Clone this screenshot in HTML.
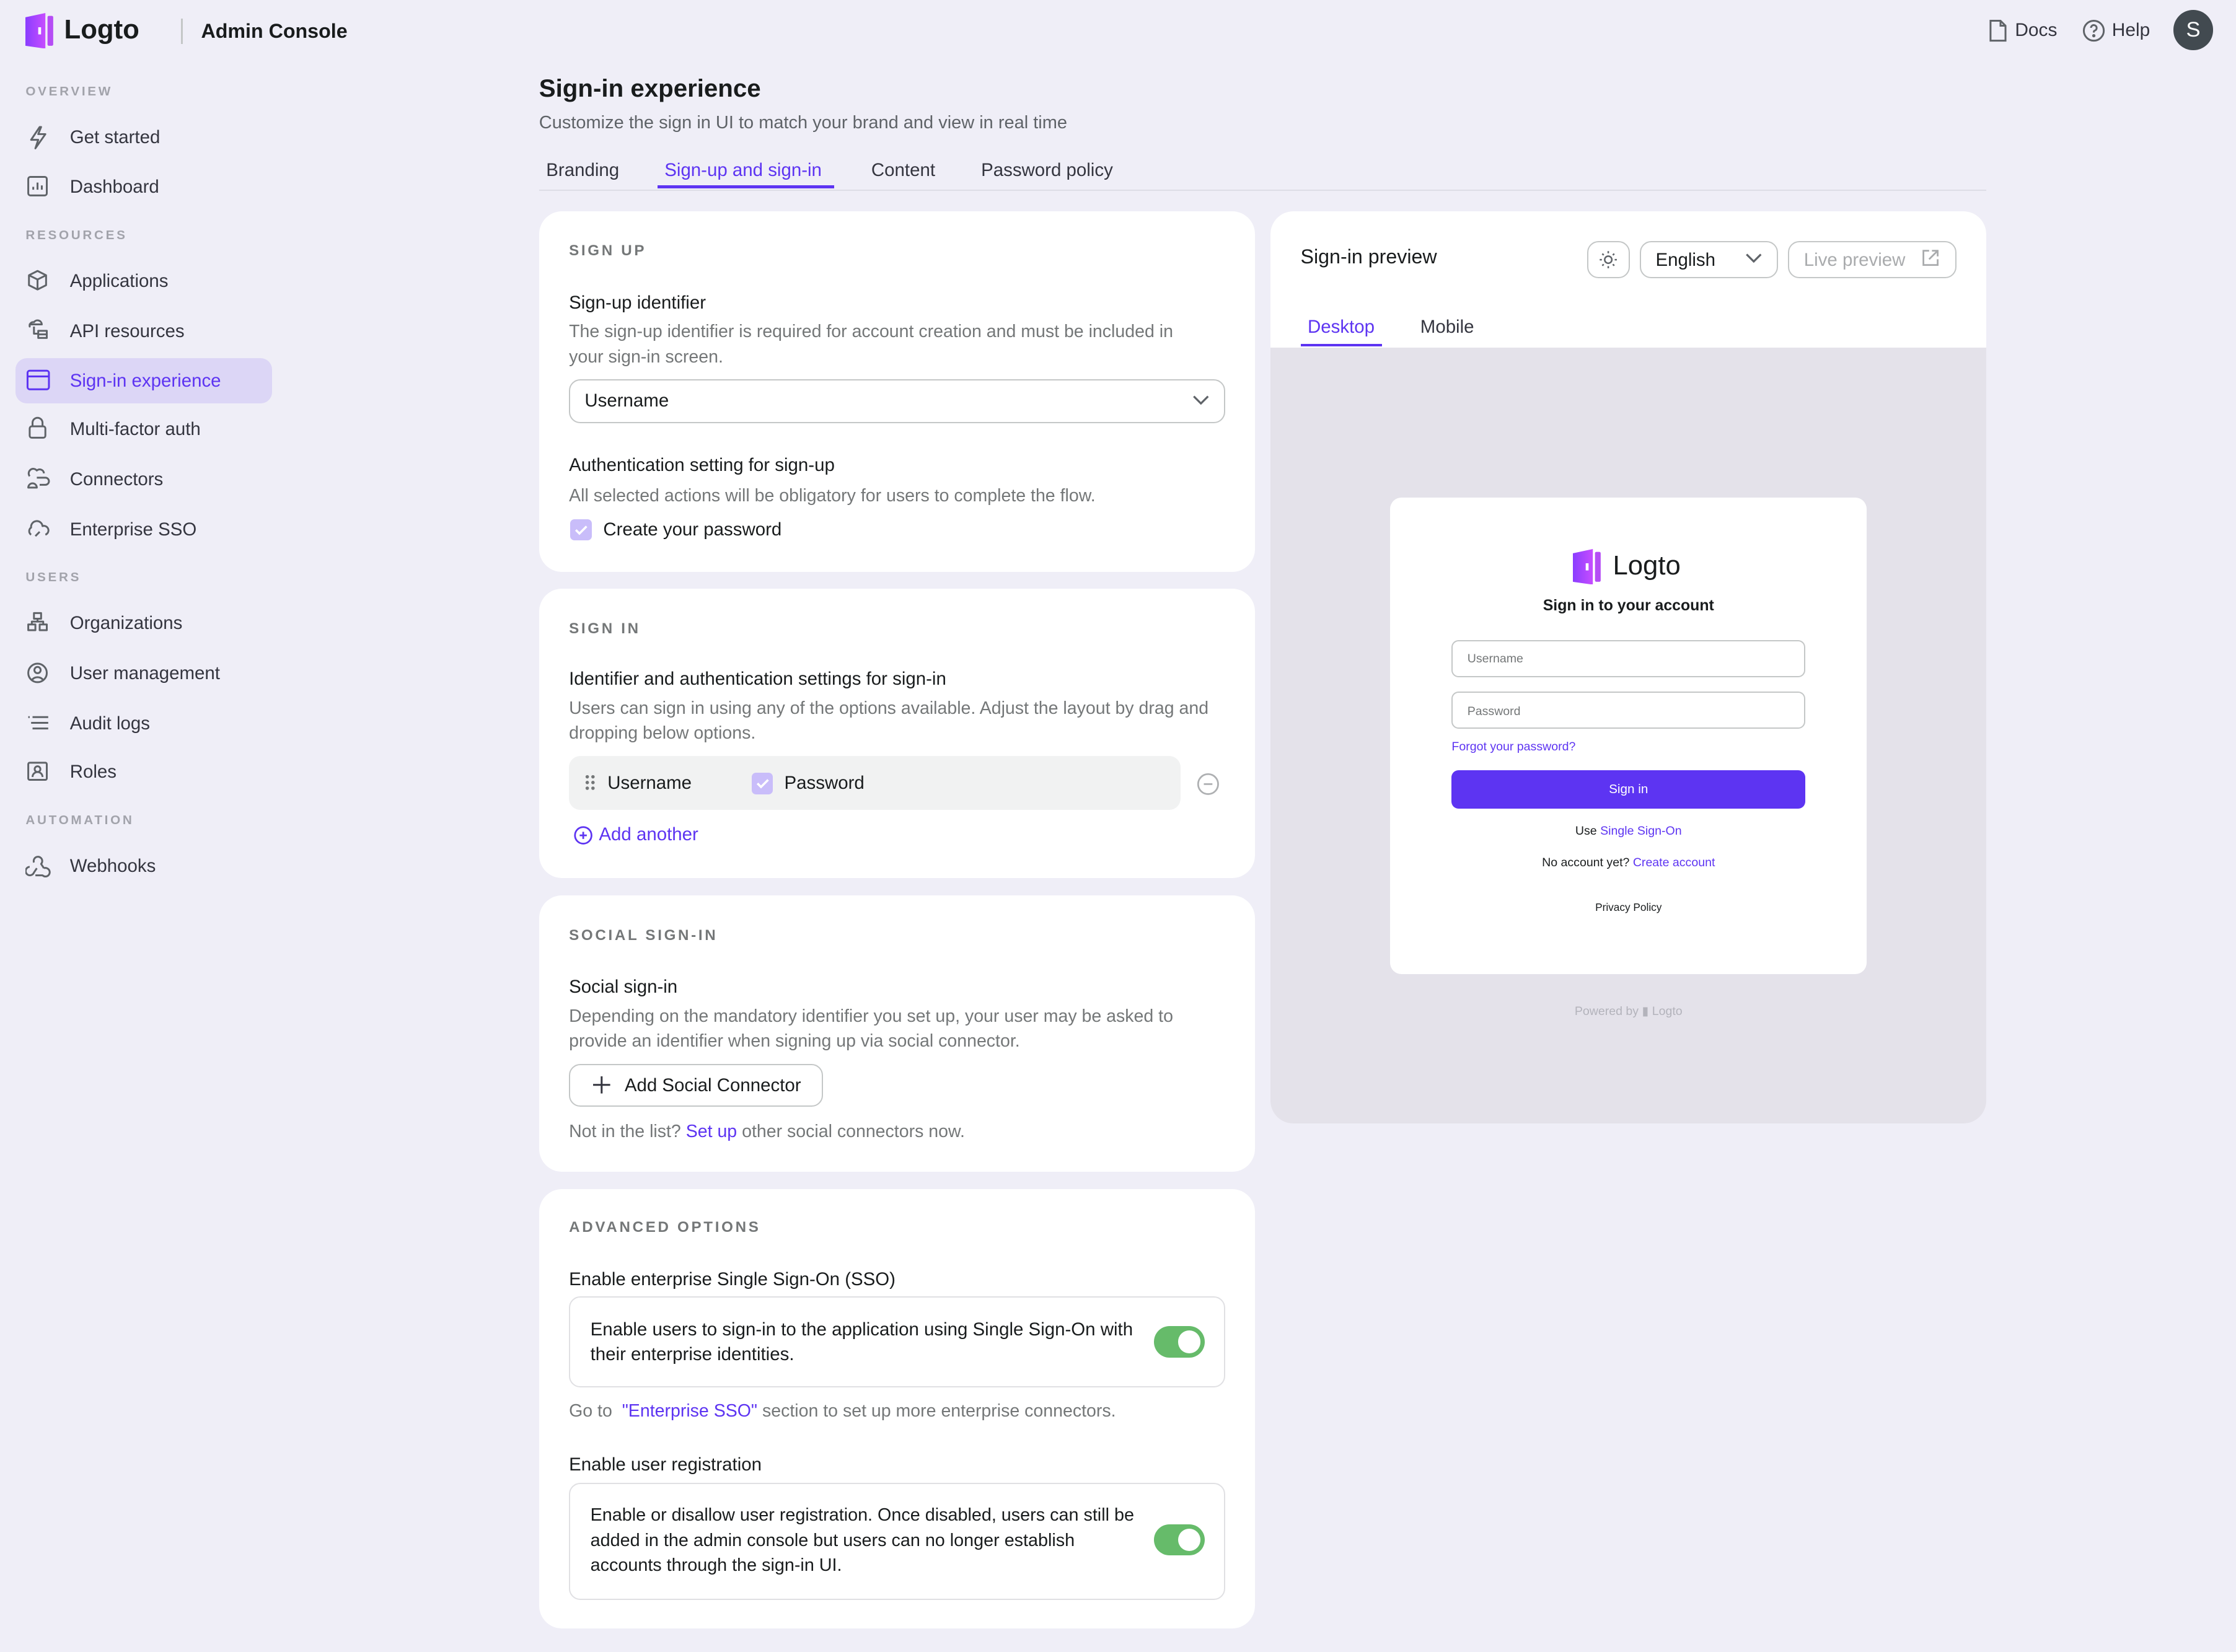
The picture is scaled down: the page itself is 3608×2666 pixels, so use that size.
<!DOCTYPE html>
<html><head><meta charset="utf-8">
<style>
*{box-sizing:border-box;margin:0;padding:0}
html,body{width:3608px;height:2666px;overflow:hidden;background:#efeef7}
#root{zoom:2.30102;width:1568px;height:1159px;position:relative;font-family:"Liberation Sans",sans-serif;color:#191c1d;background:#efeef7}
.a{position:absolute;white-space:nowrap}
.sec{font-size:9px;letter-spacing:1.6px;color:#a2a3ab;font-weight:bold}
.nav{font-size:12.8px;color:#34353f}
.card{position:absolute;background:#fff;border-radius:16px;left:378px;width:502px}
.h{font-size:10.5px;letter-spacing:1.6px;color:#747778;font-weight:bold}
.t{font-size:12.8px;color:#191c1d}
.d{font-size:12.4px;color:#747778;line-height:17.5px}
.link{color:#5d34f2}
.box{position:absolute;border:1px solid #c4c7c7;border-radius:8px;background:#fff}
.tog{position:absolute;width:36px;height:22px;border-radius:11px;background:#66bb6a}
.tog:after{content:"";position:absolute;right:3px;top:3px;width:16px;height:16px;border-radius:50%;background:#fff}
</style></head><body><div id="root">
<svg class="a" style="left:18px;top:9px" width="22" height="25" viewBox="0 0 22 25"><defs><linearGradient id="g" x1="0" x2="1"><stop offset="0" stop-color="#8a3dff"/><stop offset="1" stop-color="#c74dff"/></linearGradient></defs><path d="M0 3 L14 0 L14 25 L0 23Z" fill="url(#g)"/><rect x="15.5" y="2" width="4" height="21" rx="1" fill="#b54cf5"/><rect x="9" y="10" width="2" height="5" fill="#fff"/></svg>
<div class="a" style="left:45px;top:10px;font-size:19px;font-weight:bold;color:#191c1d">Logto</div>
<div class="a" style="left:127px;top:13px;width:1px;height:18px;background:#c4c7c7"></div>
<div class="a" style="left:141px;top:14px;font-size:14px;font-weight:bold">Admin Console</div>
<svg class="a" style="left:1393px;top:13px" width="16" height="17" viewBox="0 0 16 17" fill="none" stroke="#5f6368" stroke-width="1.3"><path d="M3 1.5h7l3.5 3.5v10.5h-10.5z M10 1.5v3.5h3.5"/></svg>
<div class="a" style="left:1413px;top:14px;font-size:13px;color:#34353f">Docs</div>
<svg class="a" style="left:1460px;top:13px" width="17" height="17" viewBox="0 0 17 17" fill="none" stroke="#5f6368" stroke-width="1.3"><circle cx="8.5" cy="8.5" r="7"/><path d="M6.5 6.5a2 2 0 1 1 2.5 2c-.5.2-.5.6-.5 1.3"/><circle cx="8.5" cy="12" r=".5" fill="#5f6368"/></svg>
<div class="a" style="left:1481px;top:14px;font-size:13px;color:#34353f">Help</div>
<div class="a" style="left:1524px;top:7px;width:28px;height:28px;border-radius:50%;background:#424a50;color:#fff;font-size:15px;text-align:center;line-height:28px">S</div>
<div class="a sec" style="left:18px;top:59px">OVERVIEW</div>
<div class="a sec" style="left:18px;top:160px">RESOURCES</div>
<div class="a sec" style="left:18px;top:400px">USERS</div>
<div class="a sec" style="left:18px;top:570px">AUTOMATION</div>
<div class="a" style="left:11px;top:251px;width:180px;height:32px;border-radius:8px;background:#dcd6f6"></div>
<div class="a nav" style="left:49px;top:89px">Get started</div>
<div class="a nav" style="left:49px;top:124px">Dashboard</div>
<div class="a nav" style="left:49px;top:190px">Applications</div>
<div class="a nav" style="left:49px;top:225px">API resources</div>
<div class="a nav" style="left:49px;top:260px;color:#5d34f2">Sign-in experience</div>
<div class="a nav" style="left:49px;top:294px">Multi-factor auth</div>
<div class="a nav" style="left:49px;top:329px">Connectors</div>
<div class="a nav" style="left:49px;top:364px">Enterprise SSO</div>
<div class="a nav" style="left:49px;top:430px">Organizations</div>
<div class="a nav" style="left:49px;top:465px">User management</div>
<div class="a nav" style="left:49px;top:500px">Audit logs</div>
<div class="a nav" style="left:49px;top:534px">Roles</div>
<div class="a nav" style="left:49px;top:600px">Webhooks</div>
<svg class="a" style="left:18px;top:0" width="18" height="620" viewBox="0 0 18 620" fill="none" stroke="#5f6368" stroke-width="1.3" stroke-linejoin="round">
<path d="M10 89 L4 98 H9 L7 104 L14 94 H9 L11 89Z"/>
<rect x="2" y="124" width="13" height="13" rx="1.5"/><path d="M5.5 133v-2M8.5 133v-5M11.5 133v-3"/>
<path d="M8.5 190l6 3v7l-6 3-6-3v-7z M2.5 193l6 3 6-3 M8.5 196v7"/>
<path d="M3 229a2.5 2.5 0 0 1 3-3 3 3 0 0 1 5.5 1.5H3z M6 229v5h3 M9 232h6v5h-6z M9 234.5h6"/>
<rect x="1.5" y="260" width="15" height="13" rx="1.5" stroke="#5d34f2"/><path d="M1.5 264h15" stroke="#5d34f2"/>
<rect x="3" y="299" width="11" height="8" rx="1.5"/><path d="M5 299v-2.5a3.5 3.5 0 0 1 7 0V299"/>
<path d="M3 334a3 3 0 0 1 5-4 3 3 0 0 1 5 2 M8 335h6a2.5 2.5 0 0 1 0 5h-4 M2 342a3 3 0 0 1 6 0z"/>
<path d="M4 375a3 3 0 0 1 0-5 4 4 0 0 1 8-1 3 3 0 0 1 2 6 M7 376l3-3"/>
<rect x="6" y="430" width="5" height="4"/><rect x="2" y="438" width="5" height="4"/><rect x="10" y="438" width="5" height="4"/><path d="M8.5 434v2M4.5 438v-2h8v2"/>
<circle cx="8.5" cy="472" r="6.5"/><circle cx="8.5" cy="470" r="2.2"/><path d="M4.5 477a5 5 0 0 1 8 0"/>
<path d="M2 503h1M5 503h11M4 507h12M5 511h11"/>
<rect x="2" y="535" width="13" height="12" rx="1"/><circle cx="8.5" cy="539.5" r="2"/><path d="M5 545a3.5 3.5 0 0 1 7 0"/>
<path d="M6 605a3 3 0 1 1 5 1l2 3 M8 609l-2 3a3 3 0 1 1-3-4 M13 609a3 3 0 1 1-1 5H7"/>
</svg>
<div class="a" style="left:378px;top:52px;font-size:17.5px;font-weight:bold">Sign-in experience</div>
<div class="a" style="left:378px;top:79px;font-size:12.6px;color:#5f6368">Customize the sign in UI to match your brand and view in real time</div>
<div class="a" style="left:378px;top:133px;width:1015px;height:1px;background:#dddde6"></div>
<div class="a" style="left:383px;top:112px;font-size:12.8px;color:#34353f">Branding</div>
<div class="a" style="left:466px;top:112px;font-size:12.8px;color:#5d34f2">Sign-up and sign-in</div>
<div class="a" style="left:461px;top:130px;width:124px;height:2px;background:#5d34f2"></div>
<div class="a" style="left:611px;top:112px;font-size:12.8px;color:#34353f">Content</div>
<div class="a" style="left:688px;top:112px;font-size:12.8px;color:#34353f">Password policy</div>
<div class="card" style="top:148px;height:253px">
<div class="a h" style="left:21px;top:22px">SIGN UP</div>
<div class="a t" style="left:21px;top:57px">Sign-up identifier</div>
<div class="a d" style="left:21px;top:76px;white-space:normal;width:445px">The sign-up identifier is required for account creation and must be included in your sign-in screen.</div>
<div class="box" style="left:21px;top:118px;width:460px;height:31px"></div>
<div class="a t" style="left:32px;top:126px">Username</div>
<svg class="a" style="left:458px;top:128px" width="12" height="10" viewBox="0 0 12 10"><path d="M1 2l5 5 5-5" fill="none" stroke="#5f6368" stroke-width="1.4"/></svg>
<div class="a t" style="left:21px;top:171px">Authentication setting for sign-up</div>
<div class="a d" style="left:21px;top:191px">All selected actions will be obligatory for users to complete the flow.</div>
<div class="a" style="left:22px;top:216px;width:15px;height:15px;border-radius:3px;background:#c9bdfa"></div>
<svg class="a" style="left:22px;top:216px" width="15" height="15"><path d="M4 7.5l2.5 2.5 5-5" fill="none" stroke="#fff" stroke-width="1.5"/></svg>
<div class="a t" style="left:45px;top:216px">Create your password</div>
</div>
<div class="card" style="top:413px;height:203px">
<div class="a h" style="left:21px;top:22px">SIGN IN</div>
<div class="a t" style="left:21px;top:56px">Identifier and authentication settings for sign-in</div>
<div class="a d" style="left:21px;top:75px;white-space:normal;width:465px">Users can sign in using any of the options available. Adjust the layout by drag and dropping below options.</div>
<div class="a" style="left:21px;top:117px;width:429px;height:38px;border-radius:8px;background:#f1f2f2"></div>
<svg class="a" style="left:32px;top:130px" width="8" height="12"><g fill="#747778"><circle cx="2" cy="2" r="1.2"/><circle cx="6" cy="2" r="1.2"/><circle cx="2" cy="6" r="1.2"/><circle cx="6" cy="6" r="1.2"/><circle cx="2" cy="10" r="1.2"/><circle cx="6" cy="10" r="1.2"/></g></svg>
<div class="a t" style="left:48px;top:129px">Username</div>
<div class="a" style="left:149px;top:129px;width:15px;height:15px;border-radius:3px;background:#c9bdfa"></div>
<svg class="a" style="left:149px;top:129px" width="15" height="15"><path d="M4 7.5l2.5 2.5 5-5" fill="none" stroke="#fff" stroke-width="1.5"/></svg>
<div class="a t" style="left:172px;top:129px">Password</div>
<svg class="a" style="left:461px;top:129px" width="16" height="16"><circle cx="8" cy="8" r="7" fill="none" stroke="#aeb0b2" stroke-width="1.2"/><path d="M5 8h6" stroke="#aeb0b2" stroke-width="1.2"/></svg>
<svg class="a" style="left:24px;top:166px" width="14" height="14"><circle cx="7" cy="7" r="5.8" fill="none" stroke="#5d34f2" stroke-width="1.2"/><path d="M4.5 7h5M7 4.5v5" stroke="#5d34f2" stroke-width="1.2"/></svg>
<div class="a t link" style="left:42px;top:165px">Add another</div>
</div>
<div class="card" style="top:628px;height:194px">
<div class="a h" style="left:21px;top:22px">SOCIAL SIGN-IN</div>
<div class="a t" style="left:21px;top:57px">Social sign-in</div>
<div class="a d" style="left:21px;top:76px;white-space:normal;width:445px">Depending on the mandatory identifier you set up, your user may be asked to provide an identifier when signing up via social connector.</div>
<div class="box" style="left:21px;top:118px;width:178px;height:30px"></div>
<svg class="a" style="left:38px;top:127px" width="12" height="12"><path d="M6 0v12M0 6h12" stroke="#34353f" stroke-width="1.3"/></svg>
<div class="a t" style="left:60px;top:126px">Add Social Connector</div>
<div class="a d" style="left:21px;top:157px">Not in the list? <span class="link">Set up</span> other social connectors now.</div>
</div>
<div class="card" style="top:834px;height:308px">
<div class="a h" style="left:21px;top:21px">ADVANCED OPTIONS</div>
<div class="a t" style="left:21px;top:56px">Enable enterprise Single Sign-On (SSO)</div>
<div class="box" style="left:21px;top:75px;width:460px;height:64px;border-color:#e0e0e3"></div>
<div class="a t" style="left:36px;top:90px;line-height:17.5px">Enable users to sign-in to the application using Single Sign-On with<br>their enterprise identities.</div>
<div class="tog" style="left:431px;top:96px"></div>
<div class="a d" style="left:21px;top:147px">Go to&nbsp; <span class="link">"Enterprise SSO"</span> section to set up more enterprise connectors.</div>
<div class="a t" style="left:21px;top:186px">Enable user registration</div>
<div class="box" style="left:21px;top:206px;width:460px;height:82px;border-color:#e0e0e3"></div>
<div class="a t" style="left:36px;top:220px;line-height:17.5px;font-size:12.5px">Enable or disallow user registration. Once disabled, users can still be<br>added in the admin console but users can no longer establish<br>accounts through the sign-in UI.</div>
<div class="tog" style="left:431px;top:235px"></div>
</div>
<div class="a" style="left:891px;top:148px;width:502px;height:640px;border-radius:16px;background:#e4e2ea;overflow:hidden">
<div class="a" style="left:0;top:0;width:502px;height:96px;background:#fff"></div>
<div class="a" style="left:21px;top:24px;font-size:14px;color:#191c1d">Sign-in preview</div>
<div class="box" style="left:222px;top:21px;width:30px;height:26px"></div>
<svg class="a" style="left:230px;top:27px" width="14" height="14" viewBox="0 0 14 14" fill="none" stroke="#5f6368" stroke-width="1.1"><circle cx="7" cy="7" r="2.5"/><path d="M7 1v1.5M7 11.5V13M1 7h1.5M11.5 7H13M2.8 2.8l1 1M10.2 10.2l1 1M2.8 11.2l1-1M10.2 3.8l1-1"/></svg>
<div class="box" style="left:259px;top:21px;width:97px;height:26px"></div>
<div class="a" style="left:270px;top:27px;font-size:12.8px">English</div>
<svg class="a" style="left:333px;top:29px" width="12" height="9"><path d="M1 1.5l5 5 5-5" fill="none" stroke="#5f6368" stroke-width="1.4"/></svg>
<div class="box" style="left:363px;top:21px;width:118px;height:26px"></div>
<div class="a" style="left:374px;top:27px;font-size:12.8px;color:#a9abad">Live preview</div>
<svg class="a" style="left:456px;top:26px" width="14" height="14" fill="none" stroke="#a9abad" stroke-width="1.2"><path d="M6 2H2v10h10V8M8 2h4v4M12 2L6 8"/></svg>
<div class="a" style="left:26px;top:74px;font-size:12.8px;color:#5d34f2">Desktop</div>
<div class="a" style="left:21px;top:93px;width:57px;height:2px;background:#5d34f2"></div>
<div class="a" style="left:105px;top:74px;font-size:12.8px;color:#34353f">Mobile</div>
<div class="a" style="left:84px;top:201px;width:334px;height:334px;background:#fff;border-radius:8px"></div>
<svg class="a" style="left:212px;top:237px" width="22" height="25" viewBox="0 0 22 25"><path d="M0 3 L14 0 L14 25 L0 23Z" fill="url(#g)"/><rect x="15.5" y="2" width="4" height="21" rx="1" fill="#b54cf5"/><rect x="9" y="10" width="2" height="5" fill="#fff"/></svg>
<div class="a" style="left:240px;top:238px;font-size:19px;color:#191c1d">Logto</div>
<div class="a" style="left:84px;top:271px;width:334px;text-align:center;font-size:10.8px;font-weight:bold">Sign in to your account</div>
<div class="box" style="left:127px;top:301px;width:248px;height:26px;border-radius:5px"></div>
<div class="a" style="left:138px;top:309px;font-size:8.5px;color:#747778">Username</div>
<div class="box" style="left:127px;top:337px;width:248px;height:26px;border-radius:5px"></div>
<div class="a" style="left:138px;top:346px;font-size:8.5px;color:#747778">Password</div>
<div class="a" style="left:127px;top:371px;font-size:8.5px;color:#5d34f2">Forgot your password?</div>
<div class="a" style="left:127px;top:392px;width:248px;height:27px;border-radius:5px;background:#5d34f2;color:#fff;font-size:9px;text-align:center;line-height:27px">Sign in</div>
<div class="a" style="left:84px;top:430px;width:334px;text-align:center;font-size:8.5px">Use <span class="link">Single Sign-On</span></div>
<div class="a" style="left:84px;top:452px;width:334px;text-align:center;font-size:8.5px">No account yet? <span class="link">Create account</span></div>
<div class="a" style="left:84px;top:484px;width:334px;text-align:center;font-size:7.5px">Privacy Policy</div>
<div class="a" style="left:84px;top:556px;width:334px;text-align:center;font-size:8.5px;color:#b3b3bb">Powered by ▮ Logto</div>
</div>
</div></body></html>
